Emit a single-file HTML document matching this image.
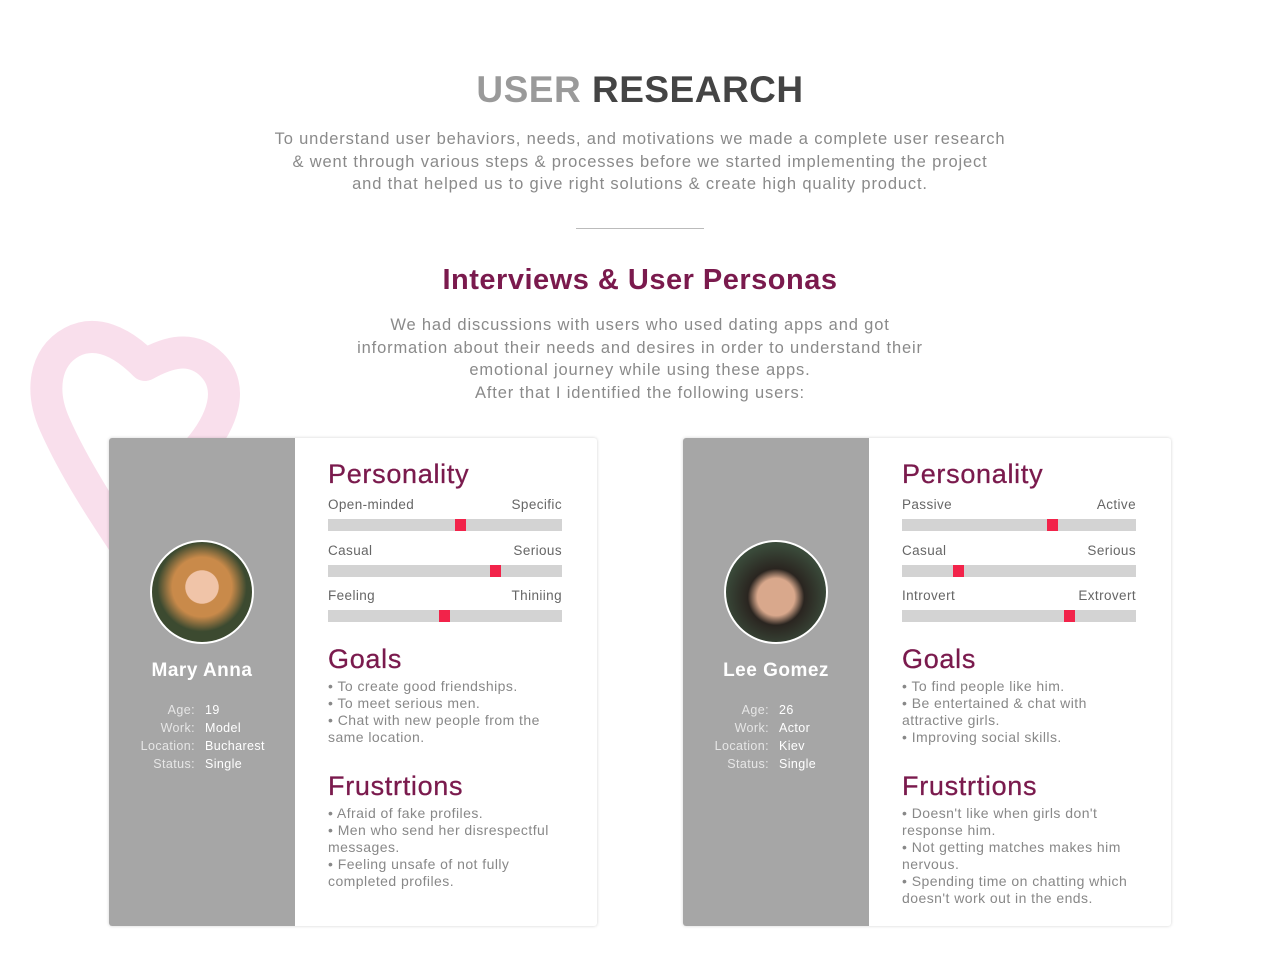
<!DOCTYPE html>
<html><head><style>
*{margin:0;padding:0;box-sizing:border-box}
body{width:1280px;height:960px;background:#fff;font-family:"Liberation Sans",sans-serif;position:relative;overflow:hidden}
.abs{position:absolute}
h1{position:absolute;top:69px;left:0;width:1280px;text-align:center;font-size:37px;font-weight:bold;color:#444;letter-spacing:.5px}
h1 span{color:#9a9a9a}
.p{position:absolute;left:0;width:1280px;text-align:center;color:#8a8a8a;font-size:16.5px;line-height:22.5px;letter-spacing:.85px}
h2{position:absolute;top:264px;left:0;width:1280px;text-align:center;font-size:29px;color:#7a1a4d;font-weight:bold;letter-spacing:.5px}
.card{position:absolute;top:438px;width:488px;height:488px;background:#fff;border-radius:3px;box-shadow:0 0 3px rgba(0,0,0,.18)}
.side{position:absolute;left:0;top:0;width:186px;height:488px;background:#a6a6a6;border-radius:3px 0 0 3px}
.av{position:absolute;left:41px;top:102px;width:104px;height:104px;border-radius:50%;border:2px solid #fff}
.name{position:absolute;left:0;width:186px;top:222px;text-align:center;color:#fff;font-size:19px;font-weight:bold;letter-spacing:.5px}
.info{position:absolute;top:263px;font-size:12.5px;line-height:18px;color:#e6e6e6;letter-spacing:.4px}
.main{position:absolute;left:219px;top:0;width:234px}
.h{position:absolute;left:0;font-size:27px;color:#7a1a4d;letter-spacing:.7px;-webkit-text-stroke:.3px #7a1a4d}
.lab{position:absolute;left:0;width:234px;font-size:13.5px;color:#666;display:flex;justify-content:space-between;letter-spacing:.4px}
.bar{position:absolute;left:0;width:234px;height:12px;background:#d3d3d3}
.bar i{position:absolute;top:0;width:11px;height:12px;background:#f2234a}
.txt{position:absolute;left:0;width:245px;font-size:14px;line-height:17px;color:#888;letter-spacing:.45px}
</style></head><body>
<svg class="abs" style="left:0;top:300px" width="260" height="260" viewBox="0 300 260 260"><path d="M145,365 C120,340 95,330 72,342 C44,357 40,392 55,425 C75,470 105,515 125,545 M145,365 C168,352 192,345 212,365 C235,388 222,422 198,450" fill="none" stroke="#f9dfec" stroke-width="32" stroke-linecap="round"/></svg>
<h1><span>USER</span> RESEARCH</h1>
<div class="p" style="top:128px">To understand user behaviors, needs, and motivations we made a complete user research<br>&amp; went through various steps &amp; processes before we started implementing the project<br>and that helped us to give right solutions &amp; create high quality product.</div>
<div class="abs" style="left:576px;top:228px;width:128px;height:1px;background:#bbb"></div>
<h2>Interviews &amp; User Personas</h2>
<div class="p" style="top:314px">We had discussions with users who used dating apps and got<br>information about their needs and desires in order to understand their<br>emotional journey while using these apps.<br>After that I identified the following users:</div>

<div class="card" style="left:109px">
<div class="side">
<div class="av" style="background:radial-gradient(circle at 50% 45%,#f0c4a8 0 22%,#c98a4a 23% 40%,#3c4a30 60%)"></div>
<div class="name">Mary Anna</div>
<div class="info" style="left:0;width:86px"><div style="text-align:right">Age:<br>Work:<br>Location:<br>Status:</div></div>
<div class="info" style="left:96px;color:#fff">19<br>Model<br>Bucharest<br>Single</div>
</div>
<div class="main">
<div class="h" style="top:21px">Personality</div>
<div class="lab" style="top:59px"><span>Open-minded</span><span>Specific</span></div>
<div class="bar" style="top:81px"><i style="left:127px"></i></div>
<div class="lab" style="top:105px"><span>Casual</span><span>Serious</span></div>
<div class="bar" style="top:127px"><i style="left:162px"></i></div>
<div class="lab" style="top:150px"><span>Feeling</span><span>Thiniing</span></div>
<div class="bar" style="top:172px"><i style="left:111px"></i></div>
<div class="h" style="top:206px">Goals</div>
<div class="txt" style="top:240px">• To create good friendships.<br>• To meet serious men.<br>• Chat with new people from the same location.</div>
<div class="h" style="top:333px">Frustrtions</div>
<div class="txt" style="top:367px">• Afraid of fake profiles.<br>• Men who send her disrespectful messages.<br>• Feeling unsafe of not fully completed profiles.</div>
</div>
</div>

<div class="card" style="left:683px">
<div class="side">
<div class="av" style="background:radial-gradient(circle at 50% 55%,#d9a88c 0 25%,#2a2520 38%,#3a4a3a 70%)"></div>
<div class="name">Lee Gomez</div>
<div class="info" style="left:0;width:86px"><div style="text-align:right">Age:<br>Work:<br>Location:<br>Status:</div></div>
<div class="info" style="left:96px;color:#fff">26<br>Actor<br>Kiev<br>Single</div>
</div>
<div class="main">
<div class="h" style="top:21px">Personality</div>
<div class="lab" style="top:59px"><span>Passive</span><span>Active</span></div>
<div class="bar" style="top:81px"><i style="left:145px"></i></div>
<div class="lab" style="top:105px"><span>Casual</span><span>Serious</span></div>
<div class="bar" style="top:127px"><i style="left:51px"></i></div>
<div class="lab" style="top:150px"><span>Introvert</span><span>Extrovert</span></div>
<div class="bar" style="top:172px"><i style="left:162px"></i></div>
<div class="h" style="top:206px">Goals</div>
<div class="txt" style="top:240px">• To find people like him.<br>• Be entertained &amp; chat with attractive girls.<br>• Improving social skills.</div>
<div class="h" style="top:333px">Frustrtions</div>
<div class="txt" style="top:367px">• Doesn't like when girls don't response him.<br>• Not getting matches makes him nervous.<br>• Spending time on chatting which doesn't work out in the ends.</div>
</div>
</div>
</body></html>
